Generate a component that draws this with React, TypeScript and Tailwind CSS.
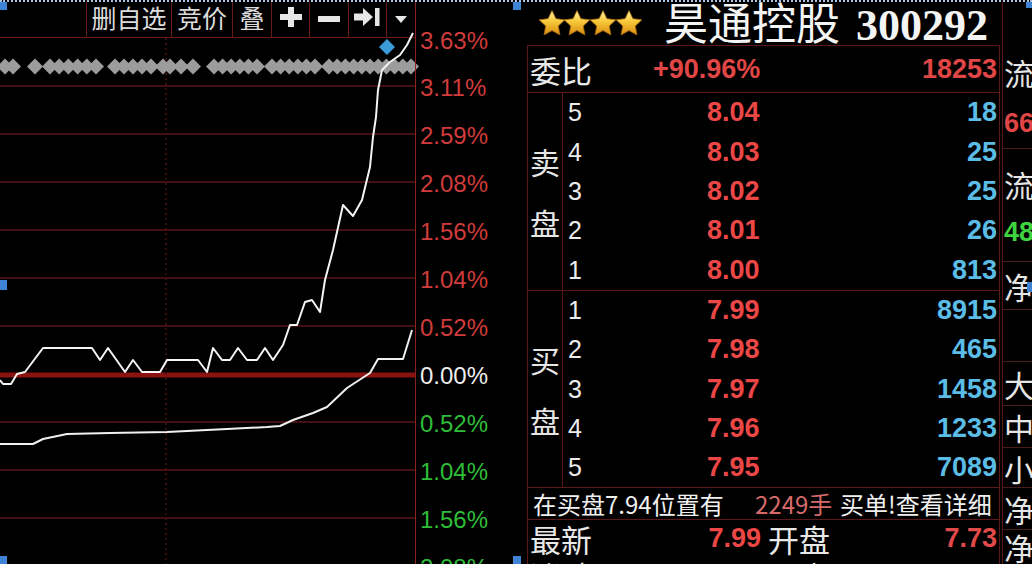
import React from "react";

type Pt = [number, number];

const NUM = "font-['Liberation_Sans',Arial,sans-serif]";
const CJK = "font-['Noto_Sans_CJK_SC','Noto_Sans',sans-serif]";

// intraday price line, page coordinates
const pricePts: Pt[] = [
  [0, 380], [3, 384], [11, 384], [17, 374], [25, 372], [43, 348], [92, 348], [100, 360],
  [108, 348], [125, 372], [133, 360], [142, 372], [160, 372], [167, 360], [198, 360],
  [207, 372], [213, 348], [222, 360], [230, 360], [238, 348], [247, 360], [257, 360],
  [265, 348], [273, 360], [283, 345], [290, 325], [297, 325], [305, 302], [312, 300],
  [320, 312], [325, 280], [333, 250], [343, 205], [353, 216], [362, 200], [370, 167],
  [373, 137], [376, 117], [378, 90], [382, 70], [390, 62], [400, 55], [407, 45], [413, 33],
];

// average price line
const avgPts: Pt[] = [
  [0, 444], [33, 444], [43, 439], [67, 434], [110, 433], [167, 432], [227, 429], [267, 427],
  [280, 426], [293, 420], [313, 413], [327, 407], [347, 388], [370, 373], [378, 359],
  [403, 359], [412, 330],
];

const gridYs = [86, 134, 182, 230, 278, 326, 422, 470, 518];

function toPath(p: Pt[]) {
  return p.map((q, i) => `${i ? "L" : "M"}${q[0]} ${q[1]}`).join(" ");
}

function diamondXs() {
  const ranges: [number, number][] = [
    [5, 13], [35, 35], [50, 96], [115, 151], [163, 170], [181, 193], [214, 257], [272, 315], [329, 411],
  ];
  const xs: number[] = [];
  for (const [a, b] of ranges) {
    if (a === b) {
      xs.push(a);
      continue;
    }
    const n = Math.max(1, Math.round((b - a) / 8.6));
    for (let i = 0; i <= n; i++) xs.push(a + ((b - a) * i) / n);
  }
  return xs;
}

function Toolbar() {
  const cell = "flex h-full items-center justify-center border-l border-[#6a1818] pb-[5px]";
  return (
    <div className="flex h-[36px] shrink-0 justify-end border-b border-[#6a1818]">
      <div className={`flex h-full text-[25px] leading-none text-[#dcdcdc] ${CJK}`}>
        <div className={`${cell} w-[85px]`}>删自选</div>
        <div className={`${cell} w-[61px]`}>竞价</div>
        <div className={`${cell} w-[39px]`}>叠</div>
        <div className={`${cell} w-[38px]`}>
          <svg width="22" height="20" viewBox="0 0 22 20">
            <rect x="0" y="7" width="22" height="6" fill="#e6e6e6" />
            <rect x="8" y="0" width="6" height="20" fill="#e6e6e6" />
          </svg>
        </div>
        <div className={`${cell} w-[39px] pt-[4px]`}>
          <svg width="22" height="6" viewBox="0 0 22 6">
            <rect x="0" y="0" width="22" height="6" fill="#e6e6e6" />
          </svg>
        </div>
        <div className={`${cell} w-[38px]`}>
          <svg width="27" height="18" viewBox="0 0 27 18">
            <rect x="0" y="5.5" width="11" height="7" fill="#e6e6e6" />
            <polygon points="9,0 19,9 9,18" fill="#e6e6e6" />
            <rect x="21" y="0" width="4.5" height="18" fill="#e6e6e6" />
          </svg>
        </div>
        <div className={`${cell} w-[29px] pt-[4px]`}>
          <svg width="12" height="7" viewBox="0 0 12 7">
            <polygon points="0,0 12,0 6,7" fill="#e6e6e6" />
          </svg>
        </div>
      </div>
    </div>
  );
}

function Chart() {
  const xs = diamondXs();
  return (
    <svg width={415} height={526} viewBox="0 38 415 526" className="block overflow-visible">
      {gridYs.map((y) => (
        <line key={y} x1={0} x2={415} y1={y} y2={y} stroke="#5a1414" strokeWidth={1.6} />
      ))}
      <line x1={0} x2={415} y1={375} y2={375} stroke="#8c1111" strokeWidth={5} />
      <line x1={166} x2={166} y1={38} y2={564} stroke="#4a1313" strokeWidth={1.5} strokeDasharray="2 3" />
      {xs.map((x, i) => (
        <polygon
          key={i}
          points={`${x - 8},66.5 ${x},58.5 ${x + 8},66.5 ${x},74.5`}
          fill="#9c9c9c"
        />
      ))}
      <polygon points="379,47 387,39 395,47 387,55" fill="#3b9bd9" />
      <path d={toPath(avgPts)} stroke="#f0f0f0" strokeWidth={2} fill="none" strokeLinejoin="round" />
      <path d={toPath(pricePts)} stroke="#f4f4f4" strokeWidth={2} fill="none" strokeLinejoin="round" />
    </svg>
  );
}

const axisLabels: { t: string; c: string }[] = [
  { t: "3.63%", c: "text-[#d03c3c]" },
  { t: "3.11%", c: "text-[#d03c3c]" },
  { t: "2.59%", c: "text-[#d03c3c]" },
  { t: "2.08%", c: "text-[#d03c3c]" },
  { t: "1.56%", c: "text-[#d03c3c]" },
  { t: "1.04%", c: "text-[#d03c3c]" },
  { t: "0.52%", c: "text-[#d03c3c]" },
  { t: "0.00%", c: "text-[#eeeeee]" },
  { t: "0.52%", c: "text-[#2fbd38]" },
  { t: "1.04%", c: "text-[#2fbd38]" },
  { t: "1.56%", c: "text-[#2fbd38]" },
  { t: "2.08%", c: "text-[#2fbd38]" },
];

function Axis() {
  return (
    <div className={`flex w-[110px] shrink-0 flex-col border-l border-[#8a2222] pt-[16px] pl-[4px] text-[24px] leading-none ${NUM}`}>
      {axisLabels.map((l, i) => (
        <div key={i} className={`flex shrink-0 items-center ${i === 0 ? "h-[46px]" : "h-[48px]"} ${l.c}`}>
          {l.t}
        </div>
      ))}
    </div>
  );
}

function Stars() {
  const star = (cx: number) => {
    const pts: string[] = [];
    for (let i = 0; i < 10; i++) {
      const r = i % 2 === 0 ? 13.5 : 6.6;
      const a = -Math.PI / 2 + (i * Math.PI) / 5;
      pts.push(`${(cx + r * Math.cos(a)).toFixed(2)},${(14 + r * Math.sin(a)).toFixed(2)}`);
    }
    return pts.join(" ");
  };
  return (
    <svg width="106" height="27" viewBox="0 0 106 27">
      <defs>
        <linearGradient id="gold" x1="0" y1="0" x2="0" y2="1">
          <stop offset="0" stopColor="#fff2a8" />
          <stop offset="0.45" stopColor="#f7c83a" />
          <stop offset="1" stopColor="#d88a10" />
        </linearGradient>
      </defs>
      {[14, 39, 65, 91].map((cx) => (
        <polygon key={cx} points={star(cx)} fill="url(#gold)" stroke="#a86a0c" strokeWidth="0.8" strokeLinejoin="round" />
      ))}
    </svg>
  );
}

const sells = [
  { n: "5", p: "8.04", v: "18" },
  { n: "4", p: "8.03", v: "25" },
  { n: "3", p: "8.02", v: "25" },
  { n: "2", p: "8.01", v: "26" },
  { n: "1", p: "8.00", v: "813" },
];

const buys = [
  { n: "1", p: "7.99", v: "8915" },
  { n: "2", p: "7.98", v: "465" },
  { n: "3", p: "7.97", v: "1458" },
  { n: "4", p: "7.96", v: "1233" },
  { n: "5", p: "7.95", v: "7089" },
];

function Book({ label, rows, h }: { label: [string, string]; rows: typeof sells; h: string }) {
  return (
    <div className={`flex shrink-0 border-b border-[#5c1818] ${h}`}>
      <div className={`flex w-[35px] shrink-0 flex-col items-center justify-center border-r border-[#5c1818] text-[30px] leading-none text-[#e6e6e6] ${CJK}`}>
        <div className="flex h-[61px] items-center">{label[0]}</div>
        <div className="flex h-[61px] items-center">{label[1]}</div>
      </div>
      <div className="flex flex-1 flex-col">
        {rows.map((r) => (
          <div key={r.n + r.p} className={`flex flex-1 items-center leading-none ${NUM}`}>
            <span className="w-[144px] pl-[5px] text-[25px] text-[#ececec]">{r.n}</span>
            <span className="w-[80px] text-[27px] font-bold text-[#ec4747]">{r.p}</span>
            <span className="flex-1 pr-[2px] text-right text-[27px] font-bold text-[#5bbde6]">{r.v}</span>
          </div>
        ))}
      </div>
    </div>
  );
}

function QuotePanel() {
  return (
    <div className="flex w-[477px] shrink-0 flex-col">
      <div className="flex h-[43px] shrink-0 items-center pl-[13px]">
        <Stars />
        <div className="ml-[20px] flex items-baseline whitespace-nowrap leading-none text-[#f4f4f4]">
          <span className={`text-[44px] ${CJK}`}>昊通控股</span>
          <span className="ml-[16px] font-['Liberation_Serif','Times_New_Roman',serif] text-[44px] font-bold">300292</span>
        </div>
      </div>
      <div className="ml-[2px] mr-[2px] flex flex-1 flex-col overflow-hidden border-x border-t border-[#5c1818]">
        <div className={`flex h-[47px] shrink-0 items-center border-b border-[#5c1818] leading-none ${NUM}`}>
          <span className={`w-[125px] pl-[2px] text-[31px] text-[#e8e8e8] ${CJK}`}>委比</span>
          <span className="text-[27px] font-bold text-[#e04646]">+90.96%</span>
          <span className="flex-1 pr-[2px] text-right text-[27px] font-bold text-[#e04646]">18253</span>
        </div>
        <Book label={["卖", "盘"]} rows={sells} h="h-[198px]" />
        <Book label={["买", "盘"]} rows={buys} h="h-[197px]" />
        <div className={`flex h-[32px] shrink-0 items-center border-b border-[#5c1818] text-[24px] leading-none whitespace-nowrap ${CJK}`}>
          <span className="w-[227px] pl-[5px] text-[#f0f0f0]">在买盘7.94位置有</span>
          <span className="w-[85px] text-[#d56b6b]">2249手</span>
          <span className="text-[#f0f0f0]">买单!查看详细</span>
        </div>
        <div className="flex h-[37px] shrink-0 items-center leading-none">
          <div className="flex w-[233px] items-center justify-between pl-[2px]">
            <span className={`text-[31px] text-[#e8e8e8] ${CJK}`}>最新</span>
            <span className={`text-[27px] font-bold text-[#ec4747] ${NUM}`}>7.99</span>
          </div>
          <span className={`ml-[7px] text-[31px] text-[#e8e8e8] ${CJK}`}>开盘</span>
          <span className={`flex-1 pr-[2px] text-right text-[27px] font-bold text-[#e04a4a] ${NUM}`}>7.73</span>
        </div>
        <div className="flex h-[36px] shrink-0 items-center leading-none">
          <div className="flex w-[233px] items-center justify-between pl-[2px]">
            <span className={`text-[31px] text-[#e8e8e8] ${CJK}`}>涨跌</span>
            <span className={`text-[27px] font-bold text-[#ec4747] ${NUM}`}>0.42</span>
          </div>
          <span className={`ml-[7px] text-[31px] text-[#e8e8e8] ${CJK}`}>最高</span>
          <span className={`flex-1 pr-[2px] text-right text-[27px] font-bold text-[#e04a4a] ${NUM}`}>8.00</span>
        </div>
      </div>
    </div>
  );
}

const side: { h: string; t?: string; c?: string; b?: boolean; num?: boolean }[] = [
  { h: "h-[43px]" },
  { h: "h-[54px]", t: "流", c: "text-[#e6e6e6]" },
  { h: "h-[50px]", t: "66", c: "text-[#e04646]", b: true, num: true },
  { h: "h-[70px]", t: "流", c: "text-[#e6e6e6]" },
  { h: "h-[26px]", t: "48", c: "text-[#3fd43f]", num: true },
  { h: "h-[17px]", b: true },
  { h: "h-[48px]", t: "净", c: "text-[#e6e6e6]", b: true },
  { h: "h-[52px]", b: true },
  { h: "h-[44px]", t: "大", c: "text-[#e6e6e6]", b: true },
  { h: "h-[42px]", t: "中", c: "text-[#e6e6e6]", b: true },
  { h: "h-[40px]", t: "小", c: "text-[#e6e6e6]", b: true },
  { h: "h-[42px]", t: "净", c: "text-[#e6e6e6]", b: true },
  { h: "h-[34px]", t: "净", c: "text-[#e6e6e6]" },
];

function SideColumn() {
  return (
    <div className="flex flex-1 flex-col overflow-hidden border-l border-[#5c1818]">
      {side.map((s, i) => (
        <div
          key={i}
          className={`flex shrink-0 items-center whitespace-nowrap pl-[1px] leading-none ${s.h} ${s.c ?? ""} ${s.b ? "border-b border-[#4a1c1c]" : ""} ${
            s.num ? `text-[27px] font-bold ${NUM}` : `text-[30px] ${CJK}`
          }`}
        >
          {s.t}
        </div>
      ))}
    </div>
  );
}

export default function App() {
  return (
    <div className="relative flex h-[564px] w-[1032px] overflow-hidden border-t-2 border-dotted border-[#a9c2e2] bg-black">
      <div className="flex w-[525px] shrink-0">
        <div className="flex w-[415px] shrink-0 flex-col">
          <Toolbar />
          <Chart />
        </div>
        <Axis />
      </div>
      <QuotePanel />
      <SideColumn />
      {/* selection handles */}
      <div className="absolute left-0 top-[-2px] h-[10px] w-[7px] bg-[#3f83d4]" />
      <div className="absolute left-[513px] top-[-2px] h-[10px] w-[8px] bg-[#3f83d4]" />
      <div className="absolute left-[1026px] top-[-2px] h-[8px] w-[6px] bg-[#3f83d4]" />
      <div className="absolute left-0 top-[278px] h-[10px] w-[7px] bg-[#3f83d4]" />
      <div className="absolute left-[1027px] top-[280px] h-[10px] w-[5px] bg-[#3f83d4]" />
      <div className="absolute left-0 top-[554px] h-[8px] w-[7px] bg-[#3f83d4]" />
      <div className="absolute left-[513px] top-[554px] h-[8px] w-[8px] bg-[#3f83d4]" />
    </div>
  );
}
